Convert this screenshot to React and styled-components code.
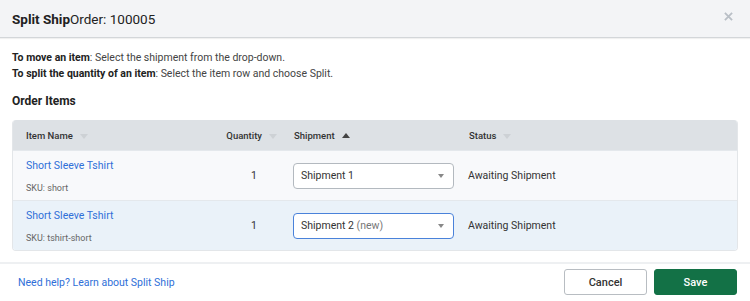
import React from "react";
import styled, { createGlobalStyle } from "styled-components";

const GlobalStyle = createGlobalStyle`
  html, body {
    margin: 0;
    padding: 0;
    background: #fff;
  }
  body {
    font-family: Roboto, "Liberation Sans", Arial, sans-serif;
    color: #333;
  }
`;

const Modal = styled.div`
  width: 750px;
  height: 301px;
  display: flex;
  flex-direction: column;
  background: #fff;
  overflow: hidden;
`;

const Header = styled.div`
  height: 37px;
  flex: none;
  display: flex;
  align-items: center;
  justify-content: space-between;
  padding: 0 16px 0 12px;
  background: #f3f4f6;
  border-bottom: 1px solid #d3d6d9;
  box-shadow: 0 1px 1px rgba(0, 0, 0, 0.06);
`;

const Title = styled.h1`
  margin: 0;
  font-size: 13.5px;
  font-weight: 400;
  color: #222;
  b {
    font-weight: 700;
  }
`;

const Close = styled.button`
  border: 0;
  background: none;
  padding: 0;
  width: 10px;
  height: 10px;
  display: flex;
  margin-top: -4px;
  svg {
    width: 9px;
    height: 9px;
  }
`;

const Body = styled.div`
  flex: 1;
  padding: 12px 12px 0;
`;

const Hint = styled.p`
  margin: 0;
  font-size: 10.5px;
  line-height: 16px;
  color: #444;
  b {
    font-weight: 700;
    color: #222;
  }
`;

const SectionTitle = styled.h2`
  margin: 10px 0 10px;
  font-size: 12px;
  line-height: 18px;
  font-weight: 700;
  color: #222;
`;

const Table = styled.div`
  border-radius: 4px;
  overflow: hidden;
  border: 1px solid #e3e6e9;
  border-top: 0;
`;

const Row = styled.div`
  display: grid;
  grid-template-columns: 188px 80px 175px 1fr;
  align-items: center;
  height: ${(p) => (p.$head ? "30px" : "49px")};
  background: ${(p) => p.$bg};
  border-top: ${(p) => (p.$head ? "0" : "1px solid #e4e8ec")};
`;

const HeadCell = styled.div`
  display: flex;
  align-items: center;
  justify-content: ${(p) => (p.$right ? "flex-end" : "flex-start")};
  gap: 7px;
  padding: ${(p) => (p.$right ? "0 4px 0 0" : "0 0 0 13px")};
  font-size: 9.5px;
  font-weight: 500;
  color: #333;
`;

const Caret = styled.span`
  width: 0;
  height: 0;
  border-left: 4px solid transparent;
  border-right: 4px solid transparent;
  ${(p) =>
    p.$up
      ? `border-bottom: 5px solid #444;`
      : `border-top: 5px solid #cdd1d5; margin-top: 2px;`}
`;

const ItemCell = styled.div`
  padding-left: 13px;
  display: flex;
  flex-direction: column;
  gap: 11px;
`;

const ItemLink = styled.a`
  font-size: 10.5px;
  color: #2f6fd8;
  text-decoration: none;
`;

const Sku = styled.span`
  font-size: 9px;
  color: #666;
`;

const Qty = styled.div`
  text-align: right;
  padding-right: 24px;
  font-size: 10.5px;
  color: #333;
`;

const SelectCell = styled.div`
  padding: 0 2px 0 12px;
`;

const Select = styled.div`
  height: 24px;
  display: flex;
  align-items: center;
  justify-content: space-between;
  padding: 0 9px 0 7px;
  border: 1px solid ${(p) => (p.$active ? "#4a82da" : "#b3b9bf")};
  border-radius: 4px;
  background: #fff;
  font-size: 10.5px;
  color: #333;
  em {
    font-style: normal;
    color: #777;
  }
`;

const SelectCaret = styled.span`
  width: 0;
  height: 0;
  border-left: 3.5px solid transparent;
  border-right: 3.5px solid transparent;
  border-top: 4.5px solid #888;
`;

const Status = styled.div`
  padding-left: 12px;
  font-size: 10.5px;
  color: #333;
`;

const Footer = styled.div`
  flex: none;
  height: 36px;
  display: flex;
  align-items: center;
  justify-content: space-between;
  padding: 0 13px 1px 18px;
  border-top: 2px solid #eef0f2;
`;

const HelpLink = styled.a`
  font-size: 10.5px;
  color: #2f6fd8;
  text-decoration: none;
`;

const Buttons = styled.div`
  display: flex;
  gap: 7px;
`;

const Button = styled.button`
  width: 83px;
  height: 26px;
  border-radius: 3px;
  font-family: inherit;
  font-size: 11px;
  font-weight: 500;
  border: 1px solid ${(p) => (p.$primary ? "#137146" : "#b8bdc2")};
  background: ${(p) => (p.$primary ? "#137146" : "#fff")};
  color: ${(p) => (p.$primary ? "#fff" : "#333")};
`;

const items = [
  { name: "Short Sleeve Tshirt", sku: "short", qty: 1, ship: "Shipment 1", bg: "#f8f9fb" },
  { name: "Short Sleeve Tshirt", sku: "tshirt-short", qty: 1, ship: "Shipment 2", isNew: true, bg: "#eaf2f9" },
];

export default function App() {
  return (
    <>
      <GlobalStyle />
      <Modal>
        <Header>
          <Title>
            <b>Split Ship</b>Order: 100005
          </Title>
          <Close aria-label="Close">
            <svg viewBox="0 0 10 10">
              <path d="M1 1L9 9M9 1L1 9" stroke="#b9bfc6" strokeWidth="2" />
            </svg>
          </Close>
        </Header>
        <Body>
          <Hint>
            <b>To move an item</b>: Select the shipment from the drop-down.
          </Hint>
          <Hint>
            <b>To split the quantity of an item</b>: Select the item row and choose Split.
          </Hint>
          <SectionTitle>Order Items</SectionTitle>
          <Table>
            <Row $head $bg="#dde1e5">
              <HeadCell>
                Item Name <Caret />
              </HeadCell>
              <HeadCell $right>
                Quantity <Caret />
              </HeadCell>
              <HeadCell>
                Shipment <Caret $up />
              </HeadCell>
              <HeadCell>
                Status <Caret />
              </HeadCell>
            </Row>
            {items.map((it, i) => (
              <Row key={i} $bg={it.bg}>
                <ItemCell>
                  <ItemLink href="#">{it.name}</ItemLink>
                  <Sku>SKU: {it.sku}</Sku>
                </ItemCell>
                <Qty>{it.qty}</Qty>
                <SelectCell>
                  <Select $active={it.isNew}>
                    <span>
                      {it.ship}
                      {it.isNew && <em> (new)</em>}
                    </span>
                    <SelectCaret />
                  </Select>
                </SelectCell>
                <Status>Awaiting Shipment</Status>
              </Row>
            ))}
          </Table>
        </Body>
        <Footer>
          <HelpLink href="#">Need help? Learn about Split Ship</HelpLink>
          <Buttons>
            <Button>Cancel</Button>
            <Button $primary>Save</Button>
          </Buttons>
        </Footer>
      </Modal>
    </>
  );
}
